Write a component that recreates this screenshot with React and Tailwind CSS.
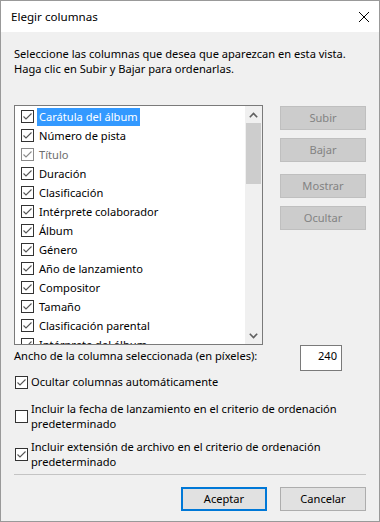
import React from 'react';

const columns = [
  { name: 'Carátula del álbum', selected: true },
  { name: 'Número de pista' },
  { name: 'Título', disabled: true },
  { name: 'Duración' },
  { name: 'Clasificación' },
  { name: 'Intérprete colaborador' },
  { name: 'Álbum' },
  { name: 'Género' },
  { name: 'Año de lanzamiento' },
  { name: 'Compositor' },
  { name: 'Tamaño' },
  { name: 'Clasificación parental' },
  { name: 'Intérprete del álbum' },
];

function CheckBox({ checked = true, muted = false }) {
  const stroke = muted ? '#8a8a8a' : '#333333';
  return (
    <svg width="13" height="13" viewBox="0 0 13 13" className="shrink-0">
      <rect x="0.5" y="0.5" width="12" height="12" fill="#ffffff" stroke={stroke} />
      {checked && (
        <polyline points="2.5,6.5 5,9 10.5,3.5" fill="none" stroke={muted ? '#8a8a8a' : '#555555'} strokeWidth="1.1" />
      )}
    </svg>
  );
}

function SideButton({ children, className = '' }) {
  return (
    <div
      className={`flex h-[24px] w-[86px] items-center justify-center border border-[#bfbfbf] bg-[#cccccc] text-[#838383] ${className}`}
    >
      {children}
    </div>
  );
}

export default function App() {
  return (
    <div
      className="flex h-[522px] w-[380px] flex-col border border-[#999999] bg-[#f0f0f0] text-[11.1px] text-black"
      style={{ fontFamily: '"Noto Sans", sans-serif' }}
    >
      <div className="flex h-[31px] shrink-0 items-center justify-between bg-white pl-[10px] pr-[10px]">
        <span className="text-[11.6px]">Elegir columnas</span>
        <svg width="10" height="10" viewBox="0 0 10 10">
          <path d="M0 0 L10 10 M10 0 L0 10" stroke="#000" strokeWidth="1" />
        </svg>
      </div>

      <div className="flex flex-col px-[13px] pt-[14px]">
        <p className="leading-[15px]">
          Seleccione las columnas que desea que aparezcan en esta vista.
          <br />
          Haga clic en Subir y Bajar para ordenarlas.
        </p>

        <div className="mt-[29px] flex">
          <div className="flex h-[240px] w-[250px] border border-[#7a7a7a] bg-white">
            <div className="flex-1 overflow-hidden pt-px">
              {columns.map((c) => (
                <div key={c.name} className="flex h-[19px] items-center pl-[6px]">
                  <CheckBox muted={c.disabled} />
                  <span
                    className={`ml-[3px] px-[2px] leading-[18px] ${
                      c.selected ? 'bg-[#3399ff] text-white' : c.disabled ? 'text-[#6d6d6d]' : ''
                    }`}
                  >
                    {c.name}
                  </span>
                </div>
              ))}
            </div>
            <div className="flex w-[17px] flex-col items-center bg-[#f0f0f0]">
              <div className="flex h-[17px] items-center justify-center">
                <svg width="9" height="6" viewBox="0 0 9 6">
                  <path d="M0.8 5.2 L4.5 1.5 L8.2 5.2" fill="none" stroke="#606060" strokeWidth="1.6" />
                </svg>
              </div>
              <div className="h-[61px] w-[15px] bg-[#cdcdcd]" />
              <div className="flex-1" />
              <div className="flex h-[17px] items-center justify-center">
                <svg width="9" height="6" viewBox="0 0 9 6">
                  <path d="M0.8 0.8 L4.5 4.5 L8.2 0.8" fill="none" stroke="#606060" strokeWidth="1.6" />
                </svg>
              </div>
            </div>
          </div>

          <div className="ml-[17px] mt-px flex flex-col">
            <SideButton>Subir</SideButton>
            <SideButton className="mt-[8px]">Bajar</SideButton>
            <SideButton className="mt-[12px]">Mostrar</SideButton>
            <SideButton className="mt-[8px]">Ocultar</SideButton>
          </div>
        </div>

        <div className="flex items-center">
          <span className="w-[286px] pb-[4px]">Ancho de la columna seleccionada (en píxeles):</span>
          <div className="flex h-[26px] w-[42px] items-start justify-end border border-[#7a7a7a] bg-white pr-[4px] pt-[2px]">
            240
          </div>
        </div>

        <label className="mt-[2px] flex h-[19px] items-center pl-px">
          <CheckBox />
          <span className="ml-[3px]">Ocultar columnas automáticamente</span>
        </label>

        <label className="mt-[9px] flex items-center pl-px">
          <CheckBox checked={false} />
          <span className="ml-[3px] leading-[15px]">
            Incluir la fecha de lanzamiento en el criterio de ordenación
            <br />
            predeterminado
          </span>
        </label>

        <label className="mt-[8px] flex items-center pl-px">
          <CheckBox />
          <span className="ml-[3px] leading-[15px]">
            Incluir extensión de archivo en el criterio de ordenación
            <br />
            predeterminado
          </span>
        </label>

        <div className="mt-[5px] h-px w-[352px] bg-[#c4c4c4]" />

        <div className="mt-[12px] flex justify-end">
          <div className="flex h-[24px] w-[86px] items-center justify-center border-2 border-[#0078d7] bg-[#e1e1e1]">
            Aceptar
          </div>
          <div className="ml-[13px] flex h-[24px] w-[86px] items-center justify-center border border-[#adadad] bg-[#e1e1e1]">
            Cancelar
          </div>
        </div>
      </div>
    </div>
  );
}
